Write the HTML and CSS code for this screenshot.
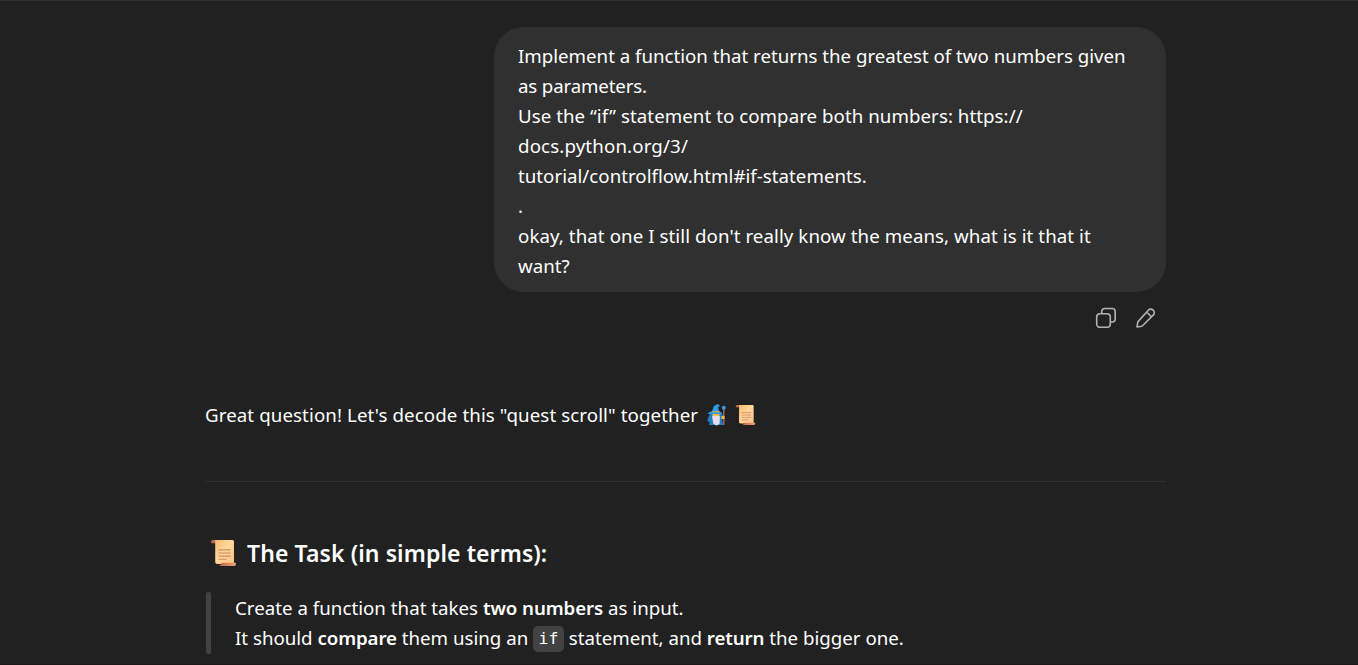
FILE: index.html
```
<!DOCTYPE html>
<html lang="en">
<head>
<meta charset="utf-8">
<title>Chat</title>
<link rel="stylesheet" href="styles.css">
</head>
<body>
<svg class="defs" aria-hidden="true">
  <defs>
    <linearGradient id="paper" x1="0" y1="0" x2="1" y2="1"><stop offset="0" stop-color="#f7b76e"/><stop offset=".45" stop-color="#ffd79b"/><stop offset="1" stop-color="#f8c286"/></linearGradient>
    <linearGradient id="roll" x1="0" y1="0" x2="1" y2="0"><stop offset="0" stop-color="#b96345"/><stop offset="1" stop-color="#eea16c"/></linearGradient>
    <symbol id="scroll" viewBox="0 0 26 27">
      <path fill="url(#roll)" d="M1 4V2.6C1 1.5 2 1 3 1h17v3z"/>
      <path fill="url(#paper)" d="M5 1h16.5c1.2 0 1.6.8 1.6 2v21H7c-1.4 0-2-.8-2-2z"/>
      <path fill="url(#roll)" d="M11 23h14v1c0 1.3-1 2-2 2H8c1.6 0 3-.8 3-3z"/>
      <path stroke="#cf8a60" stroke-width="1" d="M8 10.5h12M8 13.5h12M8 16.500h12M8 19.500h8"/>
    </symbol>
  </defs>
</svg>
<main class="thread">
  <section class="user">
    <div class="bubble">
      <span class="line l1">Implement a function that returns the greatest of two numbers given</span>
      <span class="line l2">as parameters.</span>
      <span class="line l3">Use the “if” statement to compare both numbers: https://</span>
      <span class="line l4">docs.python.org/3/</span>
      <span class="line l5">tutorial/controlflow.html#if-statements.</span>
      <span class="line">.</span>
      <span class="line l6">okay, that one I still don't really know the means, what is it that it</span>
      <span class="line l7">want?</span>
    </div>
    <div class="actions">
      <svg class="icon" viewBox="0 0 22 22"><rect x="1.700" y="6.700" width="13.600" height="13.600" rx="3.300"/><path d="M6.700 6.500V4.500a3 3 0 0 1 3-3h7.500a3 3 0 0 1 3 3v7.500a3 3 0 0 1-3 3h-1.700"/></svg>
      <svg class="icon" viewBox="0 0 22 22"><path d="M13.300 3.200a3.400 3.400 0 0 1 4.900 0 3.400 3.400 0 0 1 0 4.900L8 18.300c-.7.7-1.500 1.100-2.400 1.200L2 20l.5-3.600c.1-.9.500-1.800 1.200-2.500zM11.600 5l4.900 4.900"/></svg>
    </div>
  </section>
  <section class="reply">
    <p class="intro"><span class="l8">Great question! Let's decode this "quest scroll" together</span>
      <svg class="wizard" viewBox="0 0 20 22">
        <path fill="#247cc4" d="M3 10 1 14l-.5 3 2 1L2 21h14l-1-7 2-1-2-3z"/>
        <path fill="#f5bd42" d="M5.500 8h7v6h-7z"/>
        <path fill="#e5ddec" d="M5 12.500c2-1 6-1 8 0l-.5 7.500-3 1.500-3-1.500z"/>
        <path fill="#2f9be8" d="m1 9 4-2 2-5 4-2 2 2-2 1 1 4 3 2v1H1z"/>
        <path fill="#e0a63c" d="M5.500 7h7v1.300h-7z"/>
        <path stroke="#9b694d" stroke-width="1.500" d="M16.800 5v16"/>
        <circle cx="16.800" cy="3.800" r="2" fill="#3498ed"/><path fill="#f3bd44" d="M14.500 12h3v3h-3z"/>
      </svg>
      <svg class="scroll"><use href="#scroll"/></svg>
    </p>
    <hr class="rule">
    <h3 class="heading"><svg class="scroll-large"><use href="#scroll"/></svg><span>The Task (in simple terms):</span></h3>
    <blockquote class="quote">
      <span class="line l9">Create a function that takes <strong>two numbers</strong> as input.</span>
      <span class="line l10">It should <strong>compare</strong> them using an <code>if</code> statement, and <strong>return</strong> the bigger one.</span>
    </blockquote>
  </section>
</main>
</body>
</html>
```
FILE: styles.css
```
* { box-sizing: border-box; }
body {
  margin: 0;
  height: 665px;
  overflow: hidden;
  background: #212121;
  border-top: 1px solid #303030;
  border-bottom: 1px solid #1b1718;
  color: #fff;
  font: 18.700px/30px "Noto Sans", "Open Sans", sans-serif;
}
.defs { position: absolute; width: 0; height: 0; }
.thread { width: 961px; margin-left: 205px; padding-top: 26px; }
.user { display: flex; flex-direction: column; align-items: flex-end; }
.bubble {
  width: 672px;
  height: 265px;
  padding: 14px 24px 11px;
  border-radius: 30px;
  background: #303030;
}
.line { display: block; width: max-content; white-space: nowrap; }
.l1 { letter-spacing: -.01px; }
.l2 { letter-spacing: -.15px; }
.l3 { letter-spacing: .05px; }
.l4 { letter-spacing: .14px; }
.l5 { letter-spacing: .02px; }
.l6 { letter-spacing: .075px; }
.l8 { letter-spacing: .1px; }
.l9 { letter-spacing: .02px; }
.actions { display: flex; gap: 18px; margin-top: 15px; padding-right: 9px; }
.icon { width: 22px; height: 22px; fill: none; stroke: #b2b2b2; stroke-width: 1.600; stroke-linejoin: round; }
.reply { padding-top: 71px; }
.intro { display: flex; align-items: center; height: 30px; margin: 0; white-space: nowrap; }
.wizard { width: 20px; height: 22px; margin-left: 9px; }
.scroll { width: 21px; height: 22px; margin-left: 8px; }
.rule { height: 1px; margin: 51px 0 0; border: 0; background: #303030; }
.heading {
  display: flex;
  align-items: center;
  height: 36px;
  margin: 53px 0 0;
  padding-left: 5px;
  font-size: 23px;
  font-weight: 600;
  letter-spacing: .1px;
  line-height: 36px;
  white-space: nowrap;
}
.scroll-large { width: 27px; height: 28px; margin-right: 10px; }
.quote { position: relative; height: 62px; margin: 21px 0 0; padding: 1px 0 0 30px; }
.quote::before { content: ""; position: absolute; left: 1px; top: 0; width: 5px; height: 62px; border-radius: 2px; background: #424242; }
strong { font-weight: 600; letter-spacing: -.1px; }
code {
  display: inline-block;
  height: 26px;
  padding: 0 5.500px;
  border-radius: 5px;
  background: #424242;
  font: 16.500px/26px "DejaVu Sans Mono", monospace;
  vertical-align: 1px;
  margin-top: -1px;
}
```
